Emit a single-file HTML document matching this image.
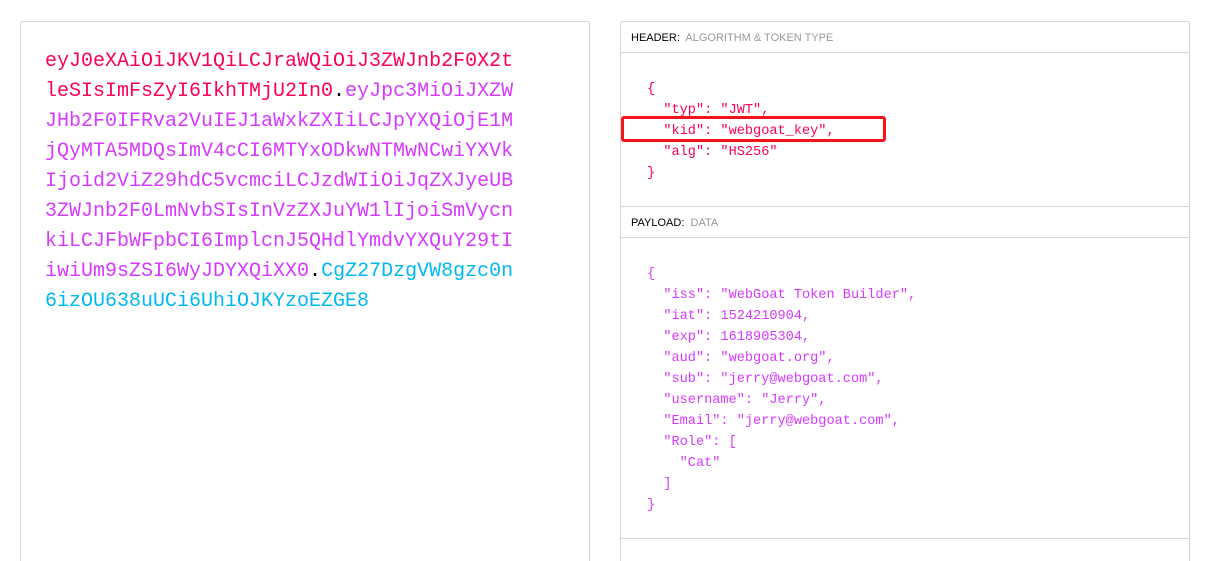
<!DOCTYPE html>
<html><head><meta charset="utf-8"><style>
*{margin:0;padding:0;box-sizing:border-box}
body{width:1230px;height:541px;background:#fff;position:relative;overflow:hidden;font-family:"Liberation Sans",sans-serif}
.left{position:absolute;left:20px;top:21px;width:570px;height:540px;border:1px solid #d5d5d5;border-bottom:none;border-radius:3px 3px 0 0}
.tok{position:absolute;left:45px;top:47px;font-family:"Liberation Mono",monospace;font-size:20px;line-height:30px;white-space:pre}
.r{color:#fb015b}.p{color:#d63aff}.c{color:#00b9f1}.k{color:#000}
.right{position:absolute;left:620px;top:21px;width:570px;height:540px;border:1px solid #d5d5d5;border-bottom:none;border-radius:3px 3px 0 0}
.lbl{position:absolute;left:0;width:568px;height:31px;border-bottom:1px solid #d5d5d5;font-size:11px;padding:10px 0 0 10px;color:#000}
.lbl span{color:#999}
.code{position:absolute;left:26px;font-family:"Liberation Mono",monospace;font-size:13.6px;line-height:21px;white-space:pre}
.sep{position:absolute;left:0;width:568px;border-top:1px solid #d5d5d5}
.box{position:absolute;left:621px;top:116px;width:265px;height:26px;border:3px solid #f4141c;border-radius:3px}
</style></head><body>
<div class="left"></div>
<div class="tok"><span class="r">eyJ0eXAiOiJKV1QiLCJraWQiOiJ3ZWJnb2F0X2t
leSIsImFsZyI6IkhTMjU2In0</span><span class="k">.</span><span class="p">eyJpc3MiOiJXZW
JHb2F0IFRva2VuIEJ1aWxkZXIiLCJpYXQiOjE1M
jQyMTA5MDQsImV4cCI6MTYxODkwNTMwNCwiYXVk
Ijoid2ViZ29hdC5vcmciLCJzdWIiOiJqZXJyeUB
3ZWJnb2F0LmNvbSIsInVzZXJuYW1lIjoiSmVycn
kiLCJFbWFpbCI6ImplcnJ5QHdlYmdvYXQuY29tI
iwiUm9sZSI6WyJDYXQiXX0</span><span class="k">.</span><span class="c">CgZ27DzgVW8gzc0n
6izOU638uUCi6UhiOJKYzoEZGE8</span></div>
<div class="right">
<div class="lbl" style="top:0">HEADER:&nbsp; <span>ALGORITHM &amp; TOKEN TYPE</span></div>
<div class="code r" style="top:57px">{
  "typ": "JWT",
  "kid": "webgoat_key",
  "alg": "HS256"
}</div>
<div class="sep" style="top:184px"></div>
<div class="lbl" style="top:185px;height:31px">PAYLOAD:&nbsp; <span>DATA</span></div>
<div class="code p" style="top:242px">{
  "iss": "WebGoat Token Builder",
  "iat": 1524210904,
  "exp": 1618905304,
  "aud": "webgoat.org",
  "sub": "jerry@webgoat.com",
  "username": "Jerry",
  "Email": "jerry@webgoat.com",
  "Role": [
    "Cat"
  ]
}</div>
<div class="sep" style="top:516px"></div>
</div>
<div class="box"></div>
</body></html>
